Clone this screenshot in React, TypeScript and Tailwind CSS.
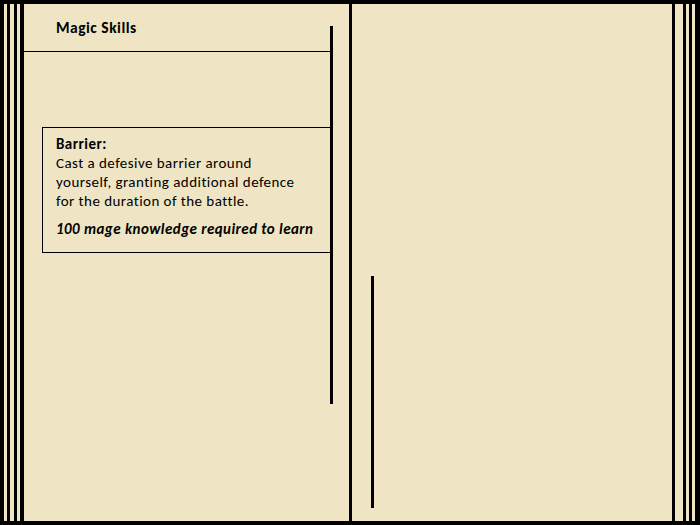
import React from "react";

const font = { fontFamily: "Carlito, Lato, 'Open Sans', sans-serif" };

function Stripes({ side }: { side: "left" | "right" }) {
  if (side === "left") {
    return (
      <div className="flex h-full shrink-0">
        <div className="w-[4px] bg-black" />
        <div className="w-[3px]" />
        <div className="w-[3px] bg-black" />
        <div className="w-[4px]" />
        <div className="w-[3px] bg-black" />
        <div className="w-[3px]" />
        <div className="w-[4px] bg-black" />
      </div>
    );
  }
  return (
    <div className="flex h-full shrink-0">
      <div className="w-[3px] bg-black" />
      <div className="w-[8px]" />
      <div className="w-[3px] bg-black" />
      <div className="w-[3px]" />
      <div className="w-[3px] bg-black" />
      <div className="w-[3px]" />
      <div className="w-[5px] bg-black" />
    </div>
  );
}

export default function App() {
  return (
    <div
      className="flex h-[525px] w-[700px] border-y-4 border-black bg-[#efe4c4] text-black"
      style={font}
    >
      <Stripes side="left" />

      {/* magic skills panel */}
      <div className="flex w-[325px] shrink-0">
        <div className="w-[306px]">
          <div className="h-[48px] border-b border-black pl-[32px] pt-[12px] text-[15.5px] font-bold tracking-[0.5px]">
            Magic Skills
          </div>
          <div className="ml-[18px] mt-[75px] h-[126px] border border-r-0 border-black pl-[13px] pt-[7px] text-[15px] leading-[19px] tracking-[0.45px]">
            <div className="font-bold">Barrier:</div>
            <p>
              Cast a defesive barrier around
              <br />
              yourself, granting additional defence
              <br />
              for the duration of the battle.
            </p>
            <p className="mt-[9px] font-bold italic">100 mage knowledge required to learn</p>
          </div>
        </div>
        <div className="mt-[22px] h-[378px] w-[3px] bg-black" />
      </div>

      <div className="h-full w-[3px] shrink-0 bg-black" />

      {/* right panel */}
      <div className="w-[320px] shrink-0 pl-[19px]">
        <div className="mt-[272px] h-[232px] w-[3px] bg-black" />
      </div>

      <Stripes side="right" />
    </div>
  );
}
